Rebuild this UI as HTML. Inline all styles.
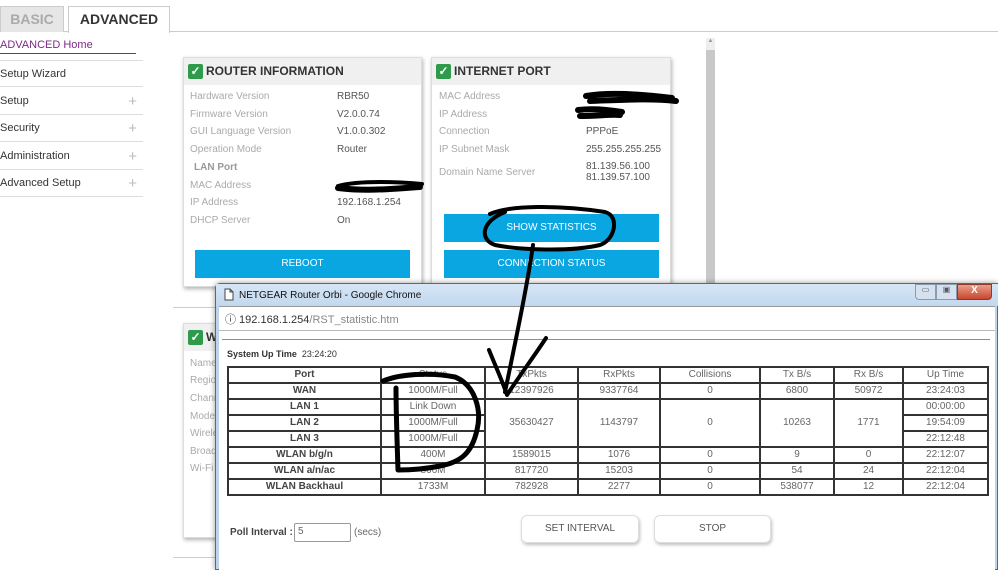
<!DOCTYPE html>
<html><head><meta charset="utf-8"><style>
*{margin:0;padding:0;box-sizing:border-box}
body{width:998px;height:570px;overflow:hidden;background:#fff;font-family:"Liberation Sans",sans-serif;position:relative}
.a{position:absolute}
.tab{position:absolute;top:6px;height:26px;font-weight:bold;font-size:14px;text-align:center;line-height:25px;border:1px solid #ccc;border-bottom:none}
.side{position:absolute;left:0;width:143px;font-size:11px;color:#333;border-bottom:1px solid #ddd;height:27px;line-height:27px}
.side span{position:absolute;right:6px;color:#bbb;font-size:15px}
.card{position:absolute;background:#fff;box-shadow:1px 2px 4px rgba(0,0,0,.3);border:1px solid #ddd}
.hd{background:#f0f0f0;height:27px;font-weight:bold;font-size:12px;color:#333;line-height:27px;padding-left:22px;position:relative}
.ck{position:absolute;left:4px;top:6px;width:15px;height:15px;background:#2e9b4a;border-radius:2px;color:#fff;font-size:12px;line-height:15px;text-align:center}
.l{position:absolute;font-size:10px;color:#aaa}
.v{position:absolute;font-size:10px;color:#555}
.btn{position:absolute;background:#0aa6e2;color:#fff;font-size:10px;text-align:center;line-height:28px}
table{border-collapse:collapse;position:absolute;left:227px;top:366px;font-size:10px;color:#666}
td{border:2px solid #333;height:16px;text-align:center;padding:0;line-height:12px}
td.p{color:#444;font-weight:bold}
</style></head><body>
<div class="a" style="left:0;top:31px;width:998px;height:1px;background:#ccc"></div>
<div class="tab" style="left:0;width:64px;background:#e6e6e6;color:#aaa">BASIC</div>
<div class="tab" style="left:68px;width:102px;background:#fff;color:#333;height:27px">ADVANCED</div>
<div class="a" style="left:0;top:39px;font-size:11px;color:#7b2a86">ADVANCED Home</div>
<div class="a" style="left:0;top:53px;width:136px;height:1px;background:#7b2a86"></div>
<div class="side" style="top:60px;border-top:1px solid #ddd">Setup Wizard</div>
<div class="side" style="top:88px">Setup<span>+</span></div>
<div class="side" style="top:115px">Security<span>+</span></div>
<div class="side" style="top:143px">Administration<span>+</span></div>
<div class="side" style="top:170px">Advanced Setup<span>+</span></div>

<div class="card" style="left:183px;top:57px;width:239px;height:230px">
<div class="hd"><div class="ck">✓</div>ROUTER INFORMATION</div></div>
<div class="l" style="left:190px;top:91px">Hardware Version</div><div class="v" style="left:337px;top:91px">RBR50</div>
<div class="l" style="left:190px;top:109px">Firmware Version</div><div class="v" style="left:337px;top:109px">V2.0.0.74</div>
<div class="l" style="left:190px;top:126px">GUI Language Version</div><div class="v" style="left:337px;top:126px">V1.0.0.302</div>
<div class="l" style="left:190px;top:144px">Operation Mode</div><div class="v" style="left:337px;top:144px">Router</div>
<div class="l" style="left:194px;top:162px;font-weight:bold;color:#999">LAN Port</div>
<div class="l" style="left:190px;top:180px">MAC Address</div>
<div class="l" style="left:190px;top:197px">IP Address</div><div class="v" style="left:337px;top:197px">192.168.1.254</div>
<div class="l" style="left:190px;top:215px">DHCP Server</div><div class="v" style="left:337px;top:215px">On</div>
<div class="btn" style="left:195px;top:250px;width:215px">REBOOT</div>

<div class="card" style="left:431px;top:57px;width:240px;height:230px">
<div class="hd"><div class="ck">✓</div>INTERNET PORT</div></div>
<div class="l" style="left:439px;top:91px">MAC Address</div>
<div class="l" style="left:439px;top:109px">IP Address</div>
<div class="l" style="left:439px;top:126px">Connection</div><div class="v" style="left:586px;top:126px">PPPoE</div>
<div class="l" style="left:439px;top:144px">IP Subnet Mask</div><div class="v" style="left:586px;top:144px">255.255.255.255</div>
<div class="l" style="left:439px;top:167px">Domain Name Server</div><div class="v" style="left:586px;top:161px;line-height:11px">81.139.56.100<br>81.139.57.100</div>
<div class="btn" style="left:444px;top:214px;width:215px">SHOW STATISTICS</div>
<div class="btn" style="left:444px;top:250px;width:215px">CONNECTION STATUS</div>

<div class="a" style="left:706px;top:38px;width:9px;height:252px;background:#c8c8c8"></div>
<div class="a" style="left:706px;top:38px;width:9px;height:12px;background:#eee;font-size:6px;color:#999;text-align:center">▲</div>

<div class="a" style="left:173px;top:307px;width:45px;height:1px;background:#ccc"></div>
<div class="a" style="left:173px;top:557px;width:45px;height:1px;background:#ccc"></div>
<div class="card" style="left:183px;top:323px;width:60px;height:215px">
<div class="hd"><div class="ck">✓</div>W</div></div>
<div class="l" style="left:190px;top:358px">Name</div>
<div class="l" style="left:190px;top:375px">Region</div>
<div class="l" style="left:190px;top:393px">Channel</div>
<div class="l" style="left:190px;top:411px">Mode</div>
<div class="l" style="left:190px;top:428px">Wireless</div>
<div class="l" style="left:190px;top:446px">Broad</div>
<div class="l" style="left:190px;top:463px">Wi-Fi</div>

<!-- popup -->
<div class="a" style="left:215px;top:283px;width:783px;height:287px;background:#bcd3ea;border:1px solid #666;border-radius:5px 0 0 0;box-shadow:0 0 6px rgba(0,0,0,.4)"></div>
<div class="a" style="left:216px;top:284px;width:782px;height:22px;background:linear-gradient(#d6e6f5,#c2d8ee)"></div>
<svg class="a" style="left:224px;top:288px" width="10" height="13" viewBox="0 0 10 13"><path d="M1 1H6L9 4V12H1Z M6 1V4H9" fill="#fff" stroke="#444" stroke-width="1"/></svg>
<div class="a" style="left:239px;top:290px;font-size:10px;color:#111">NETGEAR Router Orbi - Google Chrome</div>
<div class="a" style="left:915px;top:284px;width:21px;height:16px;background:#d5e1ee;border:1px solid #8a9bb0;border-radius:0 0 0 4px;font-size:8px;text-align:center;color:#556">▭</div>
<div class="a" style="left:936px;top:284px;width:21px;height:16px;background:#d5e1ee;border:1px solid #8a9bb0;font-size:8px;text-align:center;color:#556">▣</div>
<div class="a" style="left:957px;top:284px;width:35px;height:16px;background:linear-gradient(#e8a08c,#c8452e);border:1px solid #8a3a2a;border-radius:0 0 4px 0;font-size:10px;font-weight:bold;text-align:center;color:#fff">X</div>
<div class="a" style="left:219px;top:306px;width:776px;height:264px;background:#fff;border-top:1px solid #999"></div>
<div class="a" style="left:219px;top:330px;width:776px;height:1px;background:#bbb"></div>
<div class="a" style="left:225px;top:311px;font-size:11px;color:#333">ⓘ 192.168.1.254<span style="color:#888">/RST_statistic.htm</span></div>
<div class="a" style="left:222px;top:339px;width:768px;height:1px;background:#8b7fc8"></div>
<div class="a" style="left:227px;top:349px;font-size:9px;color:#333"><b>System Up Time</b> &nbsp;23:24:20</div>
<table>
<tr><td class="p" style="width:153px">Port</td><td style="width:104px">Status</td><td style="width:93px">TxPkts</td><td style="width:82px">RxPkts</td><td style="width:100px">Collisions</td><td style="width:74px">Tx B/s</td><td style="width:69px">Rx B/s</td><td style="width:85px">Up Time</td></tr>
<tr><td class="p">WAN</td><td>1000M/Full</td><td>12397926</td><td>9337764</td><td>0</td><td>6800</td><td>50972</td><td>23:24:03</td></tr>
<tr><td class="p">LAN 1</td><td>Link Down</td><td rowspan="3">35630427</td><td rowspan="3">1143797</td><td rowspan="3">0</td><td rowspan="3">10263</td><td rowspan="3">1771</td><td>00:00:00</td></tr>
<tr><td class="p">LAN 2</td><td>1000M/Full</td><td>19:54:09</td></tr>
<tr><td class="p">LAN 3</td><td>1000M/Full</td><td>22:12:48</td></tr>
<tr><td class="p">WLAN b/g/n</td><td>400M</td><td>1589015</td><td>1076</td><td>0</td><td>9</td><td>0</td><td>22:12:07</td></tr>
<tr><td class="p">WLAN a/n/ac</td><td>866M</td><td>817720</td><td>15203</td><td>0</td><td>54</td><td>24</td><td>22:12:04</td></tr>
<tr><td class="p">WLAN Backhaul</td><td>1733M</td><td>782928</td><td>2277</td><td>0</td><td>538077</td><td>12</td><td>22:12:04</td></tr>
</table>
<div class="a" style="left:230px;top:527px;font-size:10px;color:#444"><b>Poll Interval :</b></div>
<div class="a" style="left:294px;top:523px;width:57px;height:19px;border:1px solid #999;border-radius:2px;font-size:10px;color:#666;padding:2px 3px">5</div>
<div class="a" style="left:354px;top:527px;font-size:10px;color:#666">(secs)</div>
<div class="a" style="left:521px;top:515px;width:118px;height:28px;border:1px solid #ddd;border-radius:6px;box-shadow:1px 2px 3px rgba(0,0,0,.25);font-size:10px;color:#555;text-align:center;line-height:26px">SET INTERVAL</div>
<div class="a" style="left:654px;top:515px;width:117px;height:28px;border:1px solid #ddd;border-radius:6px;box-shadow:1px 2px 3px rgba(0,0,0,.25);font-size:10px;color:#555;text-align:center;line-height:26px">STOP</div>

<svg class="a" style="left:0;top:0" width="998" height="570" viewBox="0 0 998 570">
<g fill="none" stroke="#000" stroke-width="4" stroke-linecap="round" stroke-linejoin="round">
<path d="M338 186 C360 180 400 182 422 184"/>
<path d="M338 188 C370 192 400 188 420 187" stroke-width="6"/>
<path d="M586 96 C610 92 640 94 672 98 M590 101 C620 100 650 98 676 101" stroke-width="6"/>
<path d="M578 110 C595 108 610 110 622 112 M580 116 C598 116 612 114 620 115" stroke-width="6"/>
<path d="M490 214 C510 205 560 205 605 212 C620 216 615 240 600 245 C570 252 520 250 495 245 C480 240 480 222 505 212"/>
<path d="M533 245 C528 280 520 320 505 392"/>
<path d="M489 350 C495 365 502 380 507 395 C520 375 535 355 546 338"/>
<path d="M383 381 C400 374 430 372 455 377 C475 385 482 410 477 430 C472 452 462 462 440 466 C420 470 405 470 398 470 C397 440 396 410 396 388" stroke-width="5"/>
</g></svg>
</body></html>
